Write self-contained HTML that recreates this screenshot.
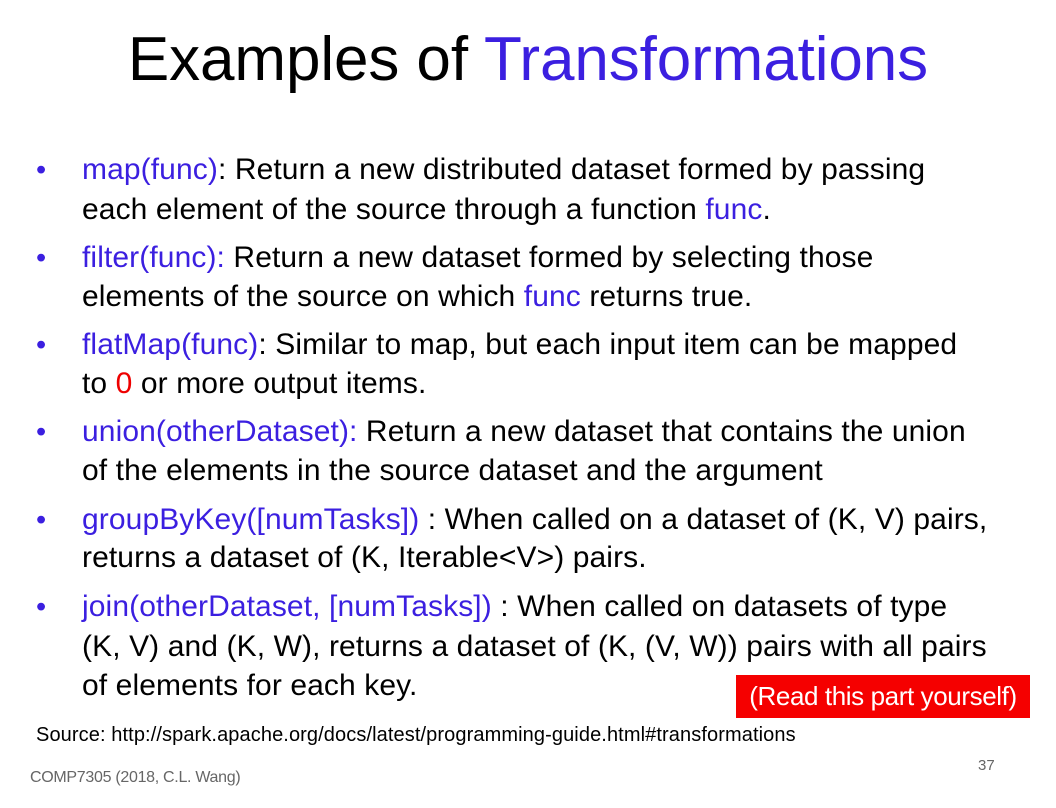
<!DOCTYPE html>
<html><head><style>
body{margin:0;width:1056px;height:808px;background:#fff;position:relative;overflow:hidden;font-family:"Liberation Sans",sans-serif;color:#000}
.t{position:absolute;left:0;width:1056px;text-align:center;top:20px;font-size:62px;letter-spacing:-0.1px;line-height:80px}
.l{position:absolute;left:82px;font-size:30px;letter-spacing:0.1px;white-space:nowrap;line-height:36px}
.b{position:absolute;left:36px;font-size:29px;color:#3b1fe0;line-height:36px}
.c{color:#3b1fe0}.r{color:#e00}
.box{position:absolute;left:736px;top:675px;width:294px;height:43px;background:#f50000;color:#fff;font-size:26px;letter-spacing:-0.4px;text-align:center;line-height:43px}
</style></head><body>
<div class="t">Examples of <span class="c">Transformations</span></div>
<div class="b" style="top:152px">•</div>
<div class="l" style="top:152px"><span class="c">map(func)</span>: Return a new distributed dataset formed by passing</div>
<div class="l" style="top:192px">each element of the source through a function <span class="c">func</span>.</div>
<div class="b" style="top:240px">•</div>
<div class="l" style="top:240px"><span class="c">filter(func):</span> Return a new dataset formed by selecting those</div>
<div class="l" style="top:279px">elements of the source on which <span class="c">func</span> returns true.</div>
<div class="b" style="top:327px">•</div>
<div class="l" style="top:327px"><span class="c">flatMap(func)</span>: Similar to map, but each input item can be mapped</div>
<div class="l" style="top:366px">to <span class="r">0</span> or more output items.</div>
<div class="b" style="top:414px">•</div>
<div class="l" style="top:414px"><span class="c">union(otherDataset):</span> Return a new dataset that contains the union</div>
<div class="l" style="top:453px">of the elements in the source dataset and the argument</div>
<div class="b" style="top:502px">•</div>
<div class="l" style="top:502px"><span class="c">groupByKey([numTasks])</span> : When called on a dataset of (K, V) pairs,</div>
<div class="l" style="top:540px">returns a dataset of (K, Iterable&lt;V&gt;) pairs.</div>
<div class="b" style="top:589px">•</div>
<div class="l" style="top:589px"><span class="c">join(otherDataset, [numTasks])</span> : When called on datasets of type</div>
<div class="l" style="top:629px">(K, V) and (K, W), returns a dataset of (K, (V, W)) pairs with all pairs</div>
<div class="l" style="top:668px">of elements for each key.</div>
<div class="box">(Read this part yourself)</div>
<div style="position:absolute;left:36px;top:724px;font-size:20px;letter-spacing:0.1px">Source: http://spark.apache.org/docs/latest/programming-guide.html#transformations</div>
<div style="position:absolute;left:978px;top:757px;font-size:15px;color:#666">37</div>
<div style="position:absolute;left:30px;top:769px;font-size:16px;color:#666;letter-spacing:-0.3px">COMP7305 (2018, C.L. Wang)</div>
</body></html>
